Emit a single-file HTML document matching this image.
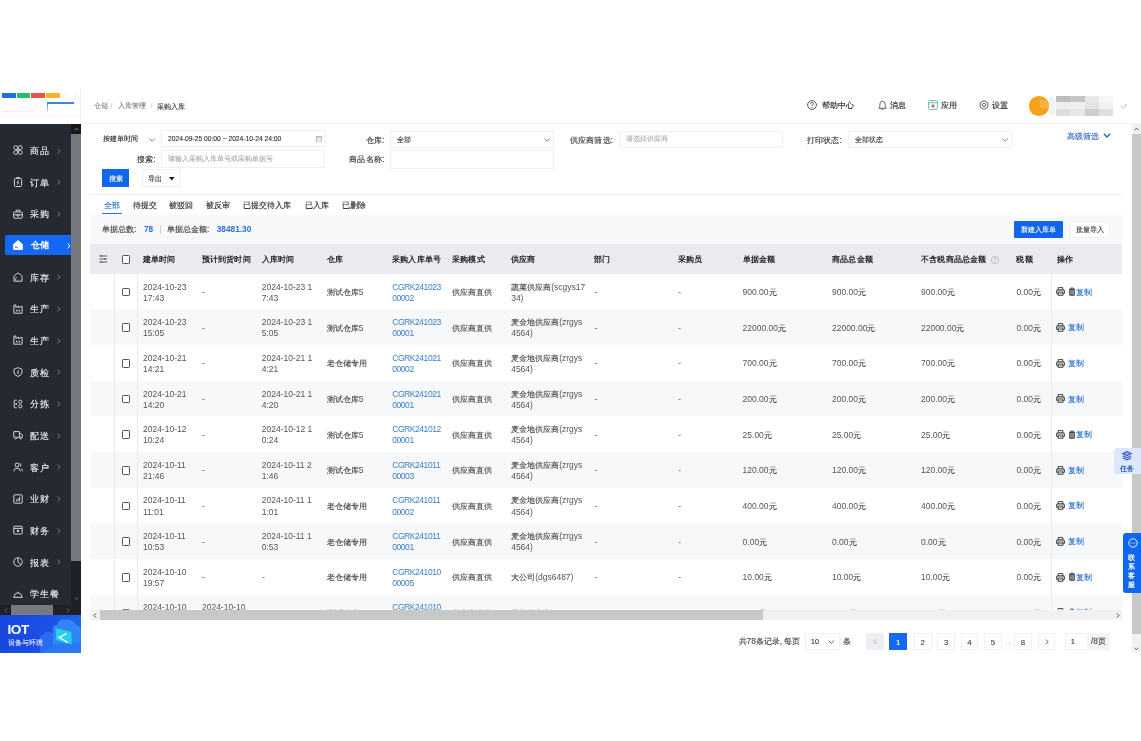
<!DOCTYPE html><html><head><meta charset="utf-8"><style>
*{margin:0;padding:0;box-sizing:border-box}
html,body{width:1141px;height:741px;overflow:hidden;background:#fff}
body{font-family:"Liberation Sans",sans-serif;color:#333;position:relative}
.abs{position:absolute}
.t{position:absolute;white-space:nowrap;line-height:1;-webkit-text-stroke:.12px currentColor}
.n{-webkit-text-stroke:0}
.k{-webkit-text-stroke:.08px currentColor}
svg{position:absolute;overflow:visible}
</style></head><body><div style="position:absolute;left:0;top:0;width:1141px;height:741px;will-change:transform">
<div class="abs" style="left:0px;top:88px;width:81px;height:36px;background:#fff;border-right:1px solid #eef0f4"></div>
<div class="abs" style="left:2px;top:93px;width:14px;height:4.6px;background:#1f6fe0"></div>
<div class="abs" style="left:17px;top:93px;width:13px;height:4.6px;background:#1fc26a"></div>
<div class="abs" style="left:31px;top:93px;width:14px;height:4.6px;background:#e9534d"></div>
<div class="abs" style="left:46px;top:93px;width:13.5px;height:4.6px;background:#f5b42a"></div>
<div class="abs" style="left:47px;top:102px;width:27px;height:1.6px;background:#3a86e0"></div>
<div class="abs" style="left:46.8px;top:102px;width:1.4px;height:9px;background:linear-gradient(#3a86e0,#a8ccf4)"></div>
<svg style="left:2px;top:100px;" width="45" height="12" viewBox="0 0 45 12" fill="none"><path d="M1 11.5 H8 L11 11 H32 L35.5 3.5" stroke="#e8d0d0" stroke-width=".6"/></svg>
<div class="abs" style="left:65.5px;top:93px;width:0.8px;height:6px;background:#eeeeee"></div>
<div class="abs" style="left:75.3px;top:93px;width:0.8px;height:6px;background:#eeeeee"></div>
<div class="abs" style="left:2px;top:114.5px;width:76px;height:0.8px;background:#f3f4f6"></div>
<div class="abs" style="left:0px;top:123.7px;width:81px;height:491.3px;background:#252932"></div>
<div class="abs" style="left:71px;top:123.7px;width:10px;height:481.3px;background:#1f2127"></div>
<div class="abs" style="left:71px;top:123.7px;width:10px;height:10.3px;background:#16171a"></div>
<svg style="left:73.5px;top:126.5px;" width="5" height="4" viewBox="0 0 5 4" fill="none"><path d="M.6 3.2 L2.5 1.2 L4.4 3.2" stroke="#8a8c90" stroke-width="1"/></svg>
<div class="abs" style="left:71px;top:134px;width:10px;height:427px;background:#77797e"></div>
<svg style="left:73.5px;top:597px;" width="5" height="4" viewBox="0 0 5 4" fill="none"><path d="M.6 .8 L2.5 2.8 L4.4 .8" stroke="#6a6c70" stroke-width="1"/></svg>
<div class="t" style="left:30.2px;top:147.10000000000002px;font-size:9.1px;color:#eceef2;letter-spacing:.8px">商品</div>
<svg style="left:56.6px;top:147.70000000000002px;" width="4" height="6" viewBox="0 0 4 6" fill="none"><path d="M.6 .6 L3 3 L.6 5.4" stroke="#7d8088" stroke-width=".9"/></svg>
<svg style="left:13.4px;top:145.3px;" width="10" height="10" viewBox="0 0 10 10" fill="none"><g stroke="#cfd2d8" stroke-width="1"><path d="M4.6 4.4 H2.5 A1.9 1.9 0 1 1 4.6 2.4 Z M5.4 4.4 V2.4 A1.9 1.9 0 1 1 7.5 4.4 Z M4.6 5.6 V7.6 A1.9 1.9 0 1 1 2.5 5.6 Z M5.4 5.6 H7.5 A1.9 1.9 0 1 1 5.4 7.6 Z"/></g></svg>
<div class="t" style="left:30.2px;top:178.77000000000004px;font-size:9.1px;color:#eceef2;letter-spacing:.8px">订单</div>
<svg style="left:56.6px;top:179.37000000000003px;" width="4" height="6" viewBox="0 0 4 6" fill="none"><path d="M.6 .6 L3 3 L.6 5.4" stroke="#7d8088" stroke-width=".9"/></svg>
<svg style="left:13.4px;top:176.97000000000003px;" width="10" height="10" viewBox="0 0 10 10" fill="none"><g stroke="#cfd2d8" stroke-width="1"><rect x="1.4" y="1.4" width="7.2" height="8.1" rx="1"/><path d="M3.5 1.4 V.6 H6.5 V1.4"/><path d="M5.6 3.4 L4 5.6 H5.6 L4.6 7.6" stroke-width=".9"/></g></svg>
<div class="t" style="left:30.2px;top:210.44000000000003px;font-size:9.1px;color:#eceef2;letter-spacing:.8px">采购</div>
<svg style="left:56.6px;top:211.04000000000002px;" width="4" height="6" viewBox="0 0 4 6" fill="none"><path d="M.6 .6 L3 3 L.6 5.4" stroke="#7d8088" stroke-width=".9"/></svg>
<svg style="left:13.4px;top:208.64000000000001px;" width="10" height="10" viewBox="0 0 10 10" fill="none"><g stroke="#cfd2d8" stroke-width="1"><rect x=".7" y="3" width="8.6" height="6.2" rx=".8"/><path d="M3.2 3 V1.2 H6.8 V3 M.7 5.8 H9.3 M4 5.8 V7 H6 V5.8"/></g></svg>
<div class="abs" style="left:5.3px;top:235.01px;width:66px;height:20.2px;background:#1468f5;border-radius:2px 0 0 2px"></div>
<div class="t n" style="left:30.6px;top:240.71px;font-size:9.1px;color:#fff;font-weight:bold">仓储</div>
<svg style="left:66.5px;top:242.71px;" width="4" height="6" viewBox="0 0 4 6" fill="none"><path d="M.6 .6 L3 3 L.6 5.4" stroke="#fff" stroke-width="1"/></svg>
<svg style="left:13.4px;top:240.31px;" width="10" height="10" viewBox="0 0 10 10" fill="none"><g stroke="#fff" stroke-width="1"><path d="M.6 4.4 L5 .6 L9.4 4.4 V9.4 H.6 Z" fill="#fff" stroke="#fff"/><rect x="2.3" y="6.3" width="1.3" height="1.6" fill="#1468f5" stroke="none"/><rect x="4" y="7.3" width="1" height="1" fill="#1468f5" stroke="none"/></g></svg>
<div class="t" style="left:30.2px;top:273.78000000000003px;font-size:9.1px;color:#eceef2;letter-spacing:.8px">库存</div>
<svg style="left:56.6px;top:274.38px;" width="4" height="6" viewBox="0 0 4 6" fill="none"><path d="M.6 .6 L3 3 L.6 5.4" stroke="#7d8088" stroke-width=".9"/></svg>
<svg style="left:13.4px;top:271.98px;" width="10" height="10" viewBox="0 0 10 10" fill="none"><g stroke="#cfd2d8" stroke-width="1"><path d="M1 4.4 Q1 3.8 1.5 3.4 L5 .9 L8.5 3.4 Q9 3.8 9 4.4 V9.2 H1 Z"/><path d="M2.6 5.4 H3.8 M2.6 6.6 V8.4 M4.6 7.8 V8.4" stroke-width=".9"/></g></svg>
<div class="t" style="left:30.2px;top:305.45000000000005px;font-size:9.1px;color:#eceef2;letter-spacing:.8px">生产</div>
<svg style="left:56.6px;top:306.05px;" width="4" height="6" viewBox="0 0 4 6" fill="none"><path d="M.6 .6 L3 3 L.6 5.4" stroke="#7d8088" stroke-width=".9"/></svg>
<svg style="left:13.4px;top:303.65000000000003px;" width="10" height="10" viewBox="0 0 10 10" fill="none"><g stroke="#cfd2d8" stroke-width="1"><path d="M.9 9.2 V1 H2.8 V3.6 L5.6 2 V3.6 L9.1 2.2 V9.2 Z"/><rect x="3" y="5.8" width="1.5" height="1.6" fill="#cfd2d8" stroke="none"/><rect x="5.6" y="5.8" width="1.5" height="1.6" fill="#cfd2d8" stroke="none"/></g></svg>
<div class="t" style="left:30.2px;top:337.12000000000006px;font-size:9.1px;color:#eceef2;letter-spacing:.8px">生产</div>
<svg style="left:56.6px;top:337.72px;" width="4" height="6" viewBox="0 0 4 6" fill="none"><path d="M.6 .6 L3 3 L.6 5.4" stroke="#7d8088" stroke-width=".9"/></svg>
<svg style="left:13.4px;top:335.32000000000005px;" width="10" height="10" viewBox="0 0 10 10" fill="none"><g stroke="#cfd2d8" stroke-width="1"><path d="M.9 9.2 V1 H2.8 V3.6 L5.6 2 V3.6 L9.1 2.2 V9.2 Z"/><rect x="3" y="5.8" width="1.5" height="1.6" fill="#cfd2d8" stroke="none"/><rect x="5.6" y="5.8" width="1.5" height="1.6" fill="#cfd2d8" stroke="none"/></g></svg>
<div class="t" style="left:30.2px;top:368.79px;font-size:9.1px;color:#eceef2;letter-spacing:.8px">质检</div>
<svg style="left:56.6px;top:369.39px;" width="4" height="6" viewBox="0 0 4 6" fill="none"><path d="M.6 .6 L3 3 L.6 5.4" stroke="#7d8088" stroke-width=".9"/></svg>
<svg style="left:13.4px;top:366.99px;" width="10" height="10" viewBox="0 0 10 10" fill="none"><g stroke="#cfd2d8" stroke-width="1"><path d="M5 .7 L9 2.2 V5.2 Q9 8 5 9.5 Q1 8 1 5.2 V2.2 Z"/><path d="M5.6 3.2 L4.2 5.2 H5.6 L4.6 7.2" stroke-width=".8"/></g></svg>
<div class="t" style="left:30.2px;top:400.46000000000004px;font-size:9.1px;color:#eceef2;letter-spacing:.8px">分拣</div>
<svg style="left:56.6px;top:401.06px;" width="4" height="6" viewBox="0 0 4 6" fill="none"><path d="M.6 .6 L3 3 L.6 5.4" stroke="#7d8088" stroke-width=".9"/></svg>
<svg style="left:13.4px;top:398.66px;" width="10" height="10" viewBox="0 0 10 10" fill="none"><g stroke="#cfd2d8" stroke-width="1"><path d="M3.8 1.2 H2 Q1.2 1.2 1.2 2 V8 Q1.2 8.8 2 8.8 H3.8"/><rect x="5.8" y="1.2" width="3" height="3" rx="1"/><rect x="5.8" y="5.8" width="3" height="3" rx="1"/><circle cx="3.3" cy="5" r=".6" fill="#cfd2d8"/></g></svg>
<div class="t" style="left:30.2px;top:432.13000000000005px;font-size:9.1px;color:#eceef2;letter-spacing:.8px">配送</div>
<svg style="left:56.6px;top:432.73px;" width="4" height="6" viewBox="0 0 4 6" fill="none"><path d="M.6 .6 L3 3 L.6 5.4" stroke="#7d8088" stroke-width=".9"/></svg>
<svg style="left:13.4px;top:430.33000000000004px;" width="10" height="10" viewBox="0 0 10 10" fill="none"><g stroke="#cfd2d8" stroke-width="1"><path d="M.8 7.4 V1.6 H6.4 V7.4 M6.4 3.4 H8 L9.3 5 V7.4 H8.6 M3.5 7.4 H6.4"/><circle cx="2.6" cy="8" r="1"/><circle cx="7.6" cy="8" r="1"/></g></svg>
<div class="t" style="left:30.2px;top:463.80000000000007px;font-size:9.1px;color:#eceef2;letter-spacing:.8px">客户</div>
<svg style="left:56.6px;top:464.40000000000003px;" width="4" height="6" viewBox="0 0 4 6" fill="none"><path d="M.6 .6 L3 3 L.6 5.4" stroke="#7d8088" stroke-width=".9"/></svg>
<svg style="left:13.4px;top:462.00000000000006px;" width="10" height="10" viewBox="0 0 10 10" fill="none"><g stroke="#cfd2d8" stroke-width="1"><circle cx="4" cy="3" r="2"/><path d="M.8 9.3 Q.8 6.2 4 6.2 Q7.2 6.2 7.2 9.3 M6.8 1.1 Q8.6 2.2 7.4 4.6 M8.2 6.4 Q9.4 7.2 9.3 9.3"/></g></svg>
<div class="t" style="left:30.2px;top:495.47px;font-size:9.1px;color:#eceef2;letter-spacing:.8px">业财</div>
<svg style="left:56.6px;top:496.07px;" width="4" height="6" viewBox="0 0 4 6" fill="none"><path d="M.6 .6 L3 3 L.6 5.4" stroke="#7d8088" stroke-width=".9"/></svg>
<svg style="left:13.4px;top:493.67px;" width="10" height="10" viewBox="0 0 10 10" fill="none"><g stroke="#cfd2d8" stroke-width="1"><rect x=".8" y=".8" width="8.4" height="8.4" rx=".8"/><path d="M3.4 5.4 V7.4 M5 4.2 V7.4 M6.6 2.8 V7.4"/></g></svg>
<div class="t" style="left:30.2px;top:527.14px;font-size:9.1px;color:#eceef2;letter-spacing:.8px">财务</div>
<svg style="left:56.6px;top:527.74px;" width="4" height="6" viewBox="0 0 4 6" fill="none"><path d="M.6 .6 L3 3 L.6 5.4" stroke="#7d8088" stroke-width=".9"/></svg>
<svg style="left:13.4px;top:525.34px;" width="10" height="10" viewBox="0 0 10 10" fill="none"><g stroke="#cfd2d8" stroke-width="1"><rect x=".8" y="1.2" width="8.4" height="7.8" rx=".6"/><path d="M.8 3.4 H9.2"/><rect x="3.9" y="4.8" width="2.2" height="2.2" fill="#cfd2d8" stroke="none"/></g></svg>
<div class="t" style="left:30.2px;top:558.81px;font-size:9.1px;color:#eceef2;letter-spacing:.8px">报表</div>
<svg style="left:56.6px;top:559.41px;" width="4" height="6" viewBox="0 0 4 6" fill="none"><path d="M.6 .6 L3 3 L.6 5.4" stroke="#7d8088" stroke-width=".9"/></svg>
<svg style="left:13.4px;top:557.01px;" width="10" height="10" viewBox="0 0 10 10" fill="none"><g stroke="#cfd2d8" stroke-width="1"><circle cx="5" cy="5" r="4.2"/><path d="M5 .8 V5 L8 7.8"/></g></svg>
<div class="t" style="left:30.2px;top:590.48px;font-size:9.1px;color:#eceef2;letter-spacing:.8px">学生餐</div>
<svg style="left:13.4px;top:588.6800000000001px;" width="10" height="10" viewBox="0 0 10 10" fill="none"><g stroke="#cfd2d8" stroke-width="1"><path d="M.3 8.3 H9.7 M1.2 8.3 Q1.2 4 5 4 Q8.8 4 8.8 8.3 M5 4 V2.8"/></g></svg>
<div class="abs" style="left:0px;top:605px;width:81px;height:9.7px;background:#1f2127"></div>
<div class="abs" style="left:11px;top:605px;width:42px;height:9.7px;background:#77797e"></div>
<svg style="left:3.5px;top:607.5px;" width="4" height="5" viewBox="0 0 4 5" fill="none"><path d="M3 .5 L1 2.5 L3 4.5" stroke="#6a6c70" stroke-width="1"/></svg>
<svg style="left:65.5px;top:607.5px;" width="4" height="5" viewBox="0 0 4 5" fill="none"><path d="M1 .5 L3 2.5 L1 4.5" stroke="#6a6c70" stroke-width="1"/></svg>
<div class="abs" style="left:0;top:614.7px;width:81px;height:38px;background:linear-gradient(100deg,#1a46dc 0%,#1b52e6 60%,#2466ee 100%);overflow:hidden"><svg style="left:0;top:0" width="81" height="38" viewBox="0 0 81 38"><path d="M40 38 V22 L47 16.5 L56 19 V38 Z" fill="#2a6cf0"/><path d="M53 38 V14 Q53 10 57 10 Q59 3.5 66 4.5 Q73 4 76 10 Q81 11 81 16 V38 Z" fill="#2f86f4"/><path d="M44 38 L52 30 L81 27 V38 Z" fill="#2a78f2"/><path d="M55.7 13 L71.6 17 V29.5 L56.2 25.2 Z" fill="#24d0ea"/><path d="M65.7 19 L59.4 22.4 L66.8 27" stroke="#f0fdff" stroke-width="1.4" fill="none"/><circle cx="65.7" cy="19" r="1" fill="#fff"/><circle cx="59.4" cy="22.4" r="1" fill="#fff"/><circle cx="66.8" cy="27" r="1" fill="#fff"/></svg><div class="t n" style="left:7.6px;top:8.2px;font-size:13.6px;font-weight:bold;color:#fff;letter-spacing:-.5px">IOT</div><div class="t" style="left:7.8px;top:24.7px;font-size:7.3px;color:#dbe6ff">设备与环境</div></div>
<div class="abs" style="left:81px;top:122.7px;width:1060px;height:1px;background:#eef0f3"></div>
<div class="t" style="left:93.6px;top:103.3px;font-size:6.8px;color:#8f9299;">仓储</div>
<div class="t" style="left:110.5px;top:103.3px;font-size:6.8px;color:#c4c6cb;">/</div>
<div class="t" style="left:118.3px;top:103.3px;font-size:7.1px;color:#7f828a;">入库管理</div>
<div class="t" style="left:150.5px;top:103.3px;font-size:6.8px;color:#c4c6cb;">/</div>
<div class="t" style="left:157px;top:102.8px;font-size:7.2px;color:#2f3238;">采购入库</div>
<div class="t" style="left:822px;top:100.8px;font-size:8.3px;color:#222;">帮助中心</div>
<div class="t" style="left:889.5px;top:100.8px;font-size:8.3px;color:#222;">消息</div>
<div class="t" style="left:941px;top:100.8px;font-size:8.3px;color:#222;">应用</div>
<div class="t" style="left:992px;top:100.8px;font-size:8.3px;color:#222;">设置</div>
<svg style="left:807.2px;top:100px;" width="10" height="10" viewBox="0 0 10 10" fill="none"><circle cx="5" cy="5" r="4.4" stroke="#555" stroke-width="1"/><path d="M3.5 3.9 Q3.5 2.4 5 2.4 Q6.5 2.4 6.5 3.7 Q6.5 4.6 5 5.2 V6.2" stroke="#555" stroke-width=".9"/><circle cx="5" cy="7.5" r=".55" fill="#555"/></svg>
<svg style="left:877.6px;top:100px;" width="9" height="10" viewBox="0 0 9 10" fill="none"><path d="M1.8 7.6 V4.6 Q1.8 1.2 4.5 1.2 Q7.2 1.2 7.2 4.6 V7.6 L8.2 8.3 H.8 Z M3.4 9.3 H5.6" stroke="#555" stroke-width=".9"/></svg>
<svg style="left:928px;top:100px;" width="10" height="10" viewBox="0 0 10 10" fill="none"><rect x=".6" y=".6" width="8.8" height="8.8" rx="1" stroke="#5ec4a8" stroke-width="1"/><path d="M.6 2.8 H9.4" stroke="#5ec4a8" stroke-width="1"/><path d="M3.2 6 H6.8 M5 4.2 V7.8" stroke="#ef5a6a" stroke-width="1.3"/></svg>
<svg style="left:979px;top:100px;" width="10" height="10" viewBox="0 0 10 10" fill="none"><path d="M5 .7 L8.8 2.85 V7.15 L5 9.3 L1.2 7.15 V2.85 Z" stroke="#555" stroke-width=".9"/><circle cx="5" cy="5" r="1.7" stroke="#555" stroke-width=".9"/></svg>
<div class="abs" style="left:1029.3px;top:96.3px;width:19.5px;height:19.3px;border-radius:50%;background:#f6a21c;overflow:hidden"><div class="abs" style="left:11px;top:4px;width:9px;height:8px;background:#f9b23d"></div></div>
<div class="abs" style="left:1048.8px;top:97px;width:6.7px;height:18px;background:#f2f2f4"></div>
<div class="abs" style="left:1055.5px;top:96.3px;width:14.5px;height:5.700000000000003px;background:#bdbdbd"></div>
<div class="abs" style="left:1070px;top:96.3px;width:14.5px;height:5.700000000000003px;background:#c6c6c6"></div>
<div class="abs" style="left:1084.5px;top:96.3px;width:14.0px;height:5.700000000000003px;background:#e9e9e9"></div>
<div class="abs" style="left:1098.5px;top:96.3px;width:14.299999999999955px;height:5.700000000000003px;background:#f6f6f6"></div>
<div class="abs" style="left:1055.5px;top:102px;width:14.5px;height:7px;background:#eeeeee"></div>
<div class="abs" style="left:1070px;top:102px;width:14.5px;height:7px;background:#efefef"></div>
<div class="abs" style="left:1084.5px;top:102px;width:14.0px;height:7px;background:#e4e4e4"></div>
<div class="abs" style="left:1098.5px;top:102px;width:14.299999999999955px;height:7px;background:#f0f0f0"></div>
<div class="abs" style="left:1055.5px;top:109px;width:14.5px;height:6.700000000000003px;background:#dedede"></div>
<div class="abs" style="left:1070px;top:109px;width:14.5px;height:6.700000000000003px;background:#e7e7e7"></div>
<div class="abs" style="left:1084.5px;top:109px;width:14.0px;height:6.700000000000003px;background:#cdcdcd"></div>
<div class="abs" style="left:1098.5px;top:109px;width:14.299999999999955px;height:6.700000000000003px;background:#dfdfdf"></div>
<svg style="left:1120px;top:103.5px;" width="7" height="6" viewBox="0 0 7 6" fill="none"><path d="M.8 1.2 L3.2 4.6 L6.2 .8 M4.6 .8 H6.2 V2.2" stroke="#c4c4c4" stroke-width="1"/></svg>
<div class="abs" style="left:1131.5px;top:123.7px;width:9.5px;height:529px;background:#f1f1f1"></div>
<div class="abs" style="left:1131.5px;top:134px;width:9.5px;height:499.7px;background:#c8c8c8"></div>
<svg style="left:1134px;top:127px;" width="5" height="4" viewBox="0 0 5 4" fill="none"><path d="M.6 3.2 L2.5 1.2 L4.4 3.2" stroke="#555" stroke-width="1"/></svg>
<svg style="left:1134px;top:646.5px;" width="5" height="4" viewBox="0 0 5 4" fill="none"><path d="M.6 .8 L2.5 2.8 L4.4 .8" stroke="#555" stroke-width="1"/></svg>
<div class="t" style="left:102.5px;top:136.4px;font-size:7.1px;color:#1f1f1f;">按建单时间</div>
<svg style="left:149.3px;top:138px;" width="6.5" height="4" viewBox="0 0 6.5 4" fill="none"><path d="M.6 .6 L3.25 3.2 L5.9 .6" stroke="#777" stroke-width=".95"/></svg>
<div class="abs" style="left:161.4px;top:130.4px;width:163.6px;height:17px;border:1px solid #eff0f3;background:#fff"></div>
<div class="t" style="left:168px;top:136.2px;font-size:6.7px;color:#333;">2024-09-25 00:00 ~ 2024-10-24 24:00</div>
<svg style="left:315.5px;top:135.8px;" width="6" height="5.5" viewBox="0 0 6 5.5" fill="none"><rect x=".5" y=".5" width="5" height="4.5" stroke="#aaa" stroke-width=".8"/><path d="M.5 2 H5.5" stroke="#aaa" stroke-width=".8"/></svg>
<div class="abs" style="left:161.4px;top:150px;width:163.6px;height:18px;border:1px solid #eff0f3;background:#fff"></div>
<div class="t" style="left:168px;top:155.9px;font-size:7.1px;color:#aaa;">请输入采购入库单号或采购单据号</div>
<div class="t" style="left:-44.099999999999994px;width:200px;text-align:right;top:155.2px;font-size:8.45px;color:#333;letter-spacing:.3px">搜索:</div>
<div class="t" style="left:184.60000000000002px;width:200px;text-align:right;top:135.6px;font-size:8.45px;color:#333;letter-spacing:.2px">仓库:</div>
<div class="abs" style="left:390px;top:130.6px;width:163.5px;height:17px;border:1px solid #eff0f3;background:#fff"></div>
<div class="t" style="left:396.5px;top:136.6px;font-size:7.1px;color:#333;">全部</div>
<svg style="left:544px;top:138px;" width="6.5" height="4" viewBox="0 0 6.5 4" fill="none"><path d="M.6 .6 L3.25 3.2 L5.9 .6" stroke="#777" stroke-width=".95"/></svg>
<div class="t" style="left:184.60000000000002px;width:200px;text-align:right;top:155.2px;font-size:8.45px;color:#333;letter-spacing:.2px">商品名称:</div>
<div class="abs" style="left:390px;top:150px;width:163.5px;height:18.5px;border:1px solid #eff0f3;background:#fff"></div>
<div class="t" style="left:413.4px;width:200px;text-align:right;top:135.6px;font-size:8.45px;color:#333;letter-spacing:.2px">供应商筛选:</div>
<div class="abs" style="left:619px;top:130.6px;width:164px;height:17px;border:1px solid #eff0f3;background:#fff"></div>
<div class="t" style="left:626px;top:136.4px;font-size:7.1px;color:#b0b0b0;">请选择供应商</div>
<div class="t" style="left:642.1px;width:200px;text-align:right;top:135.6px;font-size:8.45px;color:#333;letter-spacing:.2px">打印状态:</div>
<div class="abs" style="left:848px;top:130.6px;width:163.5px;height:17px;border:1px solid #eff0f3;background:#fff"></div>
<div class="t" style="left:855px;top:136.6px;font-size:7.1px;color:#333;">全部状态</div>
<svg style="left:1001.5px;top:138px;" width="6.5" height="4" viewBox="0 0 6.5 4" fill="none"><path d="M.6 .6 L3.25 3.2 L5.9 .6" stroke="#777" stroke-width=".95"/></svg>
<div class="t" style="left:1067px;top:131.6px;font-size:8.3px;color:#2a62c4;">高级筛选</div>
<svg style="left:1103px;top:133.3px;" width="8" height="5" viewBox="0 0 8 5" fill="none"><path d="M.8 .8 L4 4 L7.2 .8" stroke="#2a62c4" stroke-width="1.3"/></svg>
<div class="abs" style="left:102px;top:169px;width:27px;height:17.7px;background:#1266ea"></div>
<div class="t" style="left:109px;top:174.9px;font-size:7px;color:#fff;">搜索</div>
<div class="abs" style="left:141.8px;top:169px;width:39.7px;height:17.7px;border:1px solid #eef0f3"></div>
<div class="t" style="left:148.2px;top:175.2px;font-size:7.2px;color:#333;">导出</div>
<svg style="left:169.2px;top:176.6px;" width="5.6" height="3.6" viewBox="0 0 5.6 3.6" fill="none"><path d="M0 0 H5.6 L2.8 3.6 Z" fill="#1a1a1a"/></svg>
<div class="abs" style="left:90px;top:193.5px;width:1032px;height:1px;background:#eef0f3"></div>
<div class="t" style="left:104px;top:201px;font-size:8.3px;color:#2a6fd6;">全部</div>
<div class="t" style="left:132.5px;top:201px;font-size:8.3px;color:#262626;">待提交</div>
<div class="t" style="left:169px;top:201px;font-size:8.3px;color:#262626;">被驳回</div>
<div class="t" style="left:206px;top:201px;font-size:8.3px;color:#262626;">被反审</div>
<div class="t" style="left:243px;top:201px;font-size:8.3px;color:#262626;">已提交待入库</div>
<div class="t" style="left:305px;top:201px;font-size:8.3px;color:#262626;">已入库</div>
<div class="t" style="left:342px;top:201px;font-size:8.3px;color:#262626;">已删除</div>
<div class="abs" style="left:102px;top:212.5px;width:19.5px;height:1.6px;background:#2a6fd6"></div>
<div class="abs" style="left:89.6px;top:214.7px;width:1032.4px;height:29.3px;background:#f7f8fa"></div>
<div class="t" style="left:102px;top:225px;font-size:8.3px;color:#383838;">单据总数:</div>
<div class="t n" style="left:144px;top:225px;font-size:8.3px;color:#2a6fd6;font-weight:bold">78</div>
<div class="abs" style="left:160px;top:224.5px;width:1px;height:9px;background:#d0d0d0"></div>
<div class="t" style="left:167px;top:225px;font-size:8.3px;color:#383838;">单据总金额:</div>
<div class="t n" style="left:216.7px;top:225px;font-size:8.3px;color:#2a6fd6;font-weight:bold">38481.30</div>
<div class="abs" style="left:1014.2px;top:220.5px;width:48.6px;height:17.3px;background:#1266ec;border-radius:1px"></div>
<div class="t" style="left:1021px;top:226.9px;font-size:7.1px;color:#fff;">新建入库单</div>
<div class="abs" style="left:1069.8px;top:220.5px;width:40.2px;height:17.3px;background:#fff;border:1px solid #f0f1f4"></div>
<div class="t" style="left:1075.6px;top:226.9px;font-size:7.1px;color:#333;">批量导入</div>
<div class="abs" style="left:89.6px;top:244px;width:1032.4px;height:29.7px;background:#eaebf0"></div>
<div class="t n" style="left:142.6px;top:255.5px;font-size:8.1px;color:#262626;font-weight:bold;letter-spacing:.2px">建单时间</div>
<div class="t n" style="left:201.7px;top:255.5px;font-size:8.1px;color:#262626;font-weight:bold;letter-spacing:.2px">预计到货时间</div>
<div class="t n" style="left:261.5px;top:255.5px;font-size:8.1px;color:#262626;font-weight:bold;letter-spacing:.2px">入库时间</div>
<div class="t n" style="left:326.5px;top:255.5px;font-size:8.1px;color:#262626;font-weight:bold;letter-spacing:.2px">仓库</div>
<div class="t n" style="left:392px;top:255.5px;font-size:8.1px;color:#262626;font-weight:bold;letter-spacing:.2px">采购入库单号</div>
<div class="t n" style="left:452px;top:255.5px;font-size:8.1px;color:#262626;font-weight:bold;letter-spacing:.2px">采购模式</div>
<div class="t n" style="left:511px;top:255.5px;font-size:8.1px;color:#262626;font-weight:bold;letter-spacing:.2px">供应商</div>
<div class="t n" style="left:594px;top:255.5px;font-size:8.1px;color:#262626;font-weight:bold;letter-spacing:.2px">部门</div>
<div class="t n" style="left:678px;top:255.5px;font-size:8.1px;color:#262626;font-weight:bold;letter-spacing:.2px">采购员</div>
<div class="t n" style="left:742.6px;top:255.5px;font-size:8.1px;color:#262626;font-weight:bold;letter-spacing:.2px">单据金额</div>
<div class="t n" style="left:832px;top:255.5px;font-size:8.1px;color:#262626;font-weight:bold;letter-spacing:.2px">商品总金额</div>
<div class="t n" style="left:921px;top:255.5px;font-size:8.1px;color:#262626;font-weight:bold;letter-spacing:.2px">不含税商品总金额</div>
<div class="t n" style="left:1016.4px;top:255.5px;font-size:8.1px;color:#262626;font-weight:bold;letter-spacing:.2px">税额</div>
<div class="t n" style="left:1056.5px;top:255.5px;font-size:8.1px;color:#262626;font-weight:bold;letter-spacing:.2px">操作</div>
<svg style="left:991px;top:255.5px;" width="8" height="8" viewBox="0 0 10 10" fill="none"><circle cx="5" cy="5" r="4.5" stroke="#aaa" stroke-width=".8"/><path d="M3.8 4 Q3.8 2.9 5 2.9 Q6.2 2.9 6.2 3.9 Q6.2 4.6 5 5.1 V6" stroke="#aaa" stroke-width=".8"/><circle cx="5" cy="7.2" r=".5" fill="#aaa"/></svg>
<svg style="left:99px;top:255px;" width="8.5" height="8" viewBox="0 0 8.5 8" fill="none"><path d="M.3 1 H8.2 M.3 4 H8.2 M.3 7 H8.2" stroke="#666" stroke-width="1.1"/><path d="M2.5 .2 V1.8 M5.5 3.2 V4.8 M2.5 6.2 V7.8" stroke="#555" stroke-width="1.3"/></svg>
<div class="abs" style="left:121.6px;top:255px;width:8.6px;height:8.8px;border:1px solid #555;border-radius:1.2px;background:#fff"></div>
<div class="abs" style="left:0;top:0;width:1141px;height:741px;overflow:hidden;clip-path:inset(273.7px 0 131.2px 0)">
<div class="abs" style="left:89.6px;top:273.7px;width:1032.4px;height:35.66px;background:#fff"></div>
<div class="abs" style="left:121.5px;top:287.72999999999996px;width:8.6px;height:8.6px;border:1px solid #555;border-radius:1.2px;background:#fff"></div>
<div class="t n" style="left:143px;top:281.53px;font-size:8.49px;line-height:11.1px;color:#555;">2024-10-23<br>17:43</div>
<div class="t n" style="left:202px;top:287.03px;font-size:8.49px;line-height:11.1px;color:#555;">-</div>
<div class="t n" style="left:261.8px;top:281.53px;font-size:8.49px;line-height:11.1px;color:#555;">2024-10-23 1<br>7:43</div>
<div class="t n" style="left:326.8px;top:287.03px;font-size:8.49px;line-height:11.1px;color:#555;"><span class="k" style="color:#383838">测试仓库</span>5</div>
<div class="t n" style="left:392.2px;top:281.53px;font-size:8.49px;line-height:11.1px;color:#3a7fc4;letter-spacing:-0.42px">CGRK241023<br>00002</div>
<div class="t n" style="left:452px;top:287.03px;font-size:8.49px;line-height:11.1px;color:#555;"><span class="k" style="color:#383838">供应商直供</span></div>
<div class="t n" style="left:511.2px;top:281.53px;font-size:8.49px;line-height:11.1px;color:#555;"><span class="k" style="color:#383838">蔬菜供应商</span>(scgys17<br>34)</div>
<div class="t n" style="left:594.8px;top:287.03px;font-size:8.49px;line-height:11.1px;color:#555;">-</div>
<div class="t n" style="left:678.3px;top:287.03px;font-size:8.49px;line-height:11.1px;color:#555;">-</div>
<div class="t n" style="left:742.6px;top:287.03px;font-size:8.49px;line-height:11.1px;color:#555;">900.00<span class="k" style="color:#383838">元</span></div>
<div class="t n" style="left:832px;top:287.03px;font-size:8.49px;line-height:11.1px;color:#555;">900.00<span class="k" style="color:#383838">元</span></div>
<div class="t n" style="left:921px;top:287.03px;font-size:8.49px;line-height:11.1px;color:#555;">900.00<span class="k" style="color:#383838">元</span></div>
<div class="t n" style="left:1016.4px;top:287.03px;font-size:8.49px;line-height:11.1px;color:#555;">0.00<span class="k" style="color:#383838">元</span></div>
<svg style="left:1056px;top:287.33px;" width="9" height="8.6" viewBox="0 0 9 8.6" fill="none"><path d="M2.2 2.8 V.6 H6.8 V2.8" stroke="#444" stroke-width="1"/><rect x=".6" y="2.9" width="7.8" height="3.9" rx="1.3" stroke="#444" stroke-width="1.1"/><rect x="2.2" y="5" width="4.6" height="3.3" fill="#fff" stroke="#444" stroke-width="1"/><path d="M3.3 6.6 H5.7" stroke="#444" stroke-width=".7"/></svg>
<svg style="left:1069px;top:287.03px;" width="6" height="9" viewBox="0 0 6 9" fill="none"><path d="M1.2 1.4 Q1.4 .4 3 .4 Q4.6 .4 4.8 1.4" fill="#3a3a46"/><rect x=".2" y="1.4" width="5.6" height="7.4" rx=".8" fill="#3a3a46"/><rect x="1.2" y="2.8" width="1.5" height="5" fill="#9a9aaa"/><rect x="3.3" y="2.8" width="1.5" height="5" fill="#a0a8b8"/></svg>
<div class="t" style="left:1076.3px;top:288.53px;font-size:8.2px;color:#1f6dd0;">复制</div>
<div class="abs" style="left:89.6px;top:309.36px;width:1032.4px;height:35.66px;background:#f7f8fa"></div>
<div class="abs" style="left:121.5px;top:323.39px;width:8.6px;height:8.6px;border:1px solid #555;border-radius:1.2px;background:#fff"></div>
<div class="t n" style="left:143px;top:317.19px;font-size:8.49px;line-height:11.1px;color:#555;">2024-10-23<br>15:05</div>
<div class="t n" style="left:202px;top:322.69px;font-size:8.49px;line-height:11.1px;color:#555;">-</div>
<div class="t n" style="left:261.8px;top:317.19px;font-size:8.49px;line-height:11.1px;color:#555;">2024-10-23 1<br>5:05</div>
<div class="t n" style="left:326.8px;top:322.69px;font-size:8.49px;line-height:11.1px;color:#555;"><span class="k" style="color:#383838">测试仓库</span>5</div>
<div class="t n" style="left:392.2px;top:317.19px;font-size:8.49px;line-height:11.1px;color:#3a7fc4;letter-spacing:-0.42px">CGRK241023<br>00001</div>
<div class="t n" style="left:452px;top:322.69px;font-size:8.49px;line-height:11.1px;color:#555;"><span class="k" style="color:#383838">供应商直供</span></div>
<div class="t n" style="left:511.2px;top:317.19px;font-size:8.49px;line-height:11.1px;color:#555;"><span class="k" style="color:#383838">麦金地供应商</span>(zrgys<br>4564)</div>
<div class="t n" style="left:594.8px;top:322.69px;font-size:8.49px;line-height:11.1px;color:#555;">-</div>
<div class="t n" style="left:678.3px;top:322.69px;font-size:8.49px;line-height:11.1px;color:#555;">-</div>
<div class="t n" style="left:742.6px;top:322.69px;font-size:8.49px;line-height:11.1px;color:#555;">22000.00<span class="k" style="color:#383838">元</span></div>
<div class="t n" style="left:832px;top:322.69px;font-size:8.49px;line-height:11.1px;color:#555;">22000.00<span class="k" style="color:#383838">元</span></div>
<div class="t n" style="left:921px;top:322.69px;font-size:8.49px;line-height:11.1px;color:#555;">22000.00<span class="k" style="color:#383838">元</span></div>
<div class="t n" style="left:1016.4px;top:322.69px;font-size:8.49px;line-height:11.1px;color:#555;">0.00<span class="k" style="color:#383838">元</span></div>
<svg style="left:1056px;top:322.99px;" width="9" height="8.6" viewBox="0 0 9 8.6" fill="none"><path d="M2.2 2.8 V.6 H6.8 V2.8" stroke="#444" stroke-width="1"/><rect x=".6" y="2.9" width="7.8" height="3.9" rx="1.3" stroke="#444" stroke-width="1.1"/><rect x="2.2" y="5" width="4.6" height="3.3" fill="#fff" stroke="#444" stroke-width="1"/><path d="M3.3 6.6 H5.7" stroke="#444" stroke-width=".7"/></svg>
<div class="t" style="left:1067.8px;top:324.19px;font-size:8.2px;color:#1f6dd0;">复制</div>
<div class="abs" style="left:89.6px;top:345.02px;width:1032.4px;height:35.66px;background:#fff"></div>
<div class="abs" style="left:121.5px;top:359.04999999999995px;width:8.6px;height:8.6px;border:1px solid #555;border-radius:1.2px;background:#fff"></div>
<div class="t n" style="left:143px;top:352.84999999999997px;font-size:8.49px;line-height:11.1px;color:#555;">2024-10-21<br>14:21</div>
<div class="t n" style="left:202px;top:358.34999999999997px;font-size:8.49px;line-height:11.1px;color:#555;">-</div>
<div class="t n" style="left:261.8px;top:352.84999999999997px;font-size:8.49px;line-height:11.1px;color:#555;">2024-10-21 1<br>4:21</div>
<div class="t n" style="left:326.8px;top:358.34999999999997px;font-size:8.49px;line-height:11.1px;color:#555;"><span class="k" style="color:#383838">老仓储专用</span></div>
<div class="t n" style="left:392.2px;top:352.84999999999997px;font-size:8.49px;line-height:11.1px;color:#3a7fc4;letter-spacing:-0.42px">CGRK241021<br>00002</div>
<div class="t n" style="left:452px;top:358.34999999999997px;font-size:8.49px;line-height:11.1px;color:#555;"><span class="k" style="color:#383838">供应商直供</span></div>
<div class="t n" style="left:511.2px;top:352.84999999999997px;font-size:8.49px;line-height:11.1px;color:#555;"><span class="k" style="color:#383838">麦金地供应商</span>(zrgys<br>4564)</div>
<div class="t n" style="left:594.8px;top:358.34999999999997px;font-size:8.49px;line-height:11.1px;color:#555;">-</div>
<div class="t n" style="left:678.3px;top:358.34999999999997px;font-size:8.49px;line-height:11.1px;color:#555;">-</div>
<div class="t n" style="left:742.6px;top:358.34999999999997px;font-size:8.49px;line-height:11.1px;color:#555;">700.00<span class="k" style="color:#383838">元</span></div>
<div class="t n" style="left:832px;top:358.34999999999997px;font-size:8.49px;line-height:11.1px;color:#555;">700.00<span class="k" style="color:#383838">元</span></div>
<div class="t n" style="left:921px;top:358.34999999999997px;font-size:8.49px;line-height:11.1px;color:#555;">700.00<span class="k" style="color:#383838">元</span></div>
<div class="t n" style="left:1016.4px;top:358.34999999999997px;font-size:8.49px;line-height:11.1px;color:#555;">0.00<span class="k" style="color:#383838">元</span></div>
<svg style="left:1056px;top:358.65px;" width="9" height="8.6" viewBox="0 0 9 8.6" fill="none"><path d="M2.2 2.8 V.6 H6.8 V2.8" stroke="#444" stroke-width="1"/><rect x=".6" y="2.9" width="7.8" height="3.9" rx="1.3" stroke="#444" stroke-width="1.1"/><rect x="2.2" y="5" width="4.6" height="3.3" fill="#fff" stroke="#444" stroke-width="1"/><path d="M3.3 6.6 H5.7" stroke="#444" stroke-width=".7"/></svg>
<div class="t" style="left:1067.8px;top:359.84999999999997px;font-size:8.2px;color:#1f6dd0;">复制</div>
<div class="abs" style="left:89.6px;top:380.67999999999995px;width:1032.4px;height:35.66px;background:#f7f8fa"></div>
<div class="abs" style="left:121.5px;top:394.7099999999999px;width:8.6px;height:8.6px;border:1px solid #555;border-radius:1.2px;background:#fff"></div>
<div class="t n" style="left:143px;top:388.50999999999993px;font-size:8.49px;line-height:11.1px;color:#555;">2024-10-21<br>14:20</div>
<div class="t n" style="left:202px;top:394.00999999999993px;font-size:8.49px;line-height:11.1px;color:#555;">-</div>
<div class="t n" style="left:261.8px;top:388.50999999999993px;font-size:8.49px;line-height:11.1px;color:#555;">2024-10-21 1<br>4:20</div>
<div class="t n" style="left:326.8px;top:394.00999999999993px;font-size:8.49px;line-height:11.1px;color:#555;"><span class="k" style="color:#383838">测试仓库</span>5</div>
<div class="t n" style="left:392.2px;top:388.50999999999993px;font-size:8.49px;line-height:11.1px;color:#3a7fc4;letter-spacing:-0.42px">CGRK241021<br>00001</div>
<div class="t n" style="left:452px;top:394.00999999999993px;font-size:8.49px;line-height:11.1px;color:#555;"><span class="k" style="color:#383838">供应商直供</span></div>
<div class="t n" style="left:511.2px;top:388.50999999999993px;font-size:8.49px;line-height:11.1px;color:#555;"><span class="k" style="color:#383838">麦金地供应商</span>(zrgys<br>4564)</div>
<div class="t n" style="left:594.8px;top:394.00999999999993px;font-size:8.49px;line-height:11.1px;color:#555;">-</div>
<div class="t n" style="left:678.3px;top:394.00999999999993px;font-size:8.49px;line-height:11.1px;color:#555;">-</div>
<div class="t n" style="left:742.6px;top:394.00999999999993px;font-size:8.49px;line-height:11.1px;color:#555;">200.00<span class="k" style="color:#383838">元</span></div>
<div class="t n" style="left:832px;top:394.00999999999993px;font-size:8.49px;line-height:11.1px;color:#555;">200.00<span class="k" style="color:#383838">元</span></div>
<div class="t n" style="left:921px;top:394.00999999999993px;font-size:8.49px;line-height:11.1px;color:#555;">200.00<span class="k" style="color:#383838">元</span></div>
<div class="t n" style="left:1016.4px;top:394.00999999999993px;font-size:8.49px;line-height:11.1px;color:#555;">0.00<span class="k" style="color:#383838">元</span></div>
<svg style="left:1056px;top:394.30999999999995px;" width="9" height="8.6" viewBox="0 0 9 8.6" fill="none"><path d="M2.2 2.8 V.6 H6.8 V2.8" stroke="#444" stroke-width="1"/><rect x=".6" y="2.9" width="7.8" height="3.9" rx="1.3" stroke="#444" stroke-width="1.1"/><rect x="2.2" y="5" width="4.6" height="3.3" fill="#fff" stroke="#444" stroke-width="1"/><path d="M3.3 6.6 H5.7" stroke="#444" stroke-width=".7"/></svg>
<div class="t" style="left:1067.8px;top:395.50999999999993px;font-size:8.2px;color:#1f6dd0;">复制</div>
<div class="abs" style="left:89.6px;top:416.34px;width:1032.4px;height:35.66px;background:#fff"></div>
<div class="abs" style="left:121.5px;top:430.36999999999995px;width:8.6px;height:8.6px;border:1px solid #555;border-radius:1.2px;background:#fff"></div>
<div class="t n" style="left:143px;top:424.16999999999996px;font-size:8.49px;line-height:11.1px;color:#555;">2024-10-12<br>10:24</div>
<div class="t n" style="left:202px;top:429.66999999999996px;font-size:8.49px;line-height:11.1px;color:#555;">-</div>
<div class="t n" style="left:261.8px;top:424.16999999999996px;font-size:8.49px;line-height:11.1px;color:#555;">2024-10-12 1<br>0:24</div>
<div class="t n" style="left:326.8px;top:429.66999999999996px;font-size:8.49px;line-height:11.1px;color:#555;"><span class="k" style="color:#383838">测试仓库</span>5</div>
<div class="t n" style="left:392.2px;top:424.16999999999996px;font-size:8.49px;line-height:11.1px;color:#3a7fc4;letter-spacing:-0.42px">CGRK241012<br>00001</div>
<div class="t n" style="left:452px;top:429.66999999999996px;font-size:8.49px;line-height:11.1px;color:#555;"><span class="k" style="color:#383838">供应商直供</span></div>
<div class="t n" style="left:511.2px;top:424.16999999999996px;font-size:8.49px;line-height:11.1px;color:#555;"><span class="k" style="color:#383838">麦金地供应商</span>(zrgys<br>4564)</div>
<div class="t n" style="left:594.8px;top:429.66999999999996px;font-size:8.49px;line-height:11.1px;color:#555;">-</div>
<div class="t n" style="left:678.3px;top:429.66999999999996px;font-size:8.49px;line-height:11.1px;color:#555;">-</div>
<div class="t n" style="left:742.6px;top:429.66999999999996px;font-size:8.49px;line-height:11.1px;color:#555;">25.00<span class="k" style="color:#383838">元</span></div>
<div class="t n" style="left:832px;top:429.66999999999996px;font-size:8.49px;line-height:11.1px;color:#555;">25.00<span class="k" style="color:#383838">元</span></div>
<div class="t n" style="left:921px;top:429.66999999999996px;font-size:8.49px;line-height:11.1px;color:#555;">25.00<span class="k" style="color:#383838">元</span></div>
<div class="t n" style="left:1016.4px;top:429.66999999999996px;font-size:8.49px;line-height:11.1px;color:#555;">0.00<span class="k" style="color:#383838">元</span></div>
<svg style="left:1056px;top:429.96999999999997px;" width="9" height="8.6" viewBox="0 0 9 8.6" fill="none"><path d="M2.2 2.8 V.6 H6.8 V2.8" stroke="#444" stroke-width="1"/><rect x=".6" y="2.9" width="7.8" height="3.9" rx="1.3" stroke="#444" stroke-width="1.1"/><rect x="2.2" y="5" width="4.6" height="3.3" fill="#fff" stroke="#444" stroke-width="1"/><path d="M3.3 6.6 H5.7" stroke="#444" stroke-width=".7"/></svg>
<svg style="left:1069px;top:429.66999999999996px;" width="6" height="9" viewBox="0 0 6 9" fill="none"><path d="M1.2 1.4 Q1.4 .4 3 .4 Q4.6 .4 4.8 1.4" fill="#3a3a46"/><rect x=".2" y="1.4" width="5.6" height="7.4" rx=".8" fill="#3a3a46"/><rect x="1.2" y="2.8" width="1.5" height="5" fill="#9a9aaa"/><rect x="3.3" y="2.8" width="1.5" height="5" fill="#a0a8b8"/></svg>
<div class="t" style="left:1076.3px;top:431.16999999999996px;font-size:8.2px;color:#1f6dd0;">复制</div>
<div class="abs" style="left:89.6px;top:452.0px;width:1032.4px;height:35.66px;background:#f7f8fa"></div>
<div class="abs" style="left:121.5px;top:466.03px;width:8.6px;height:8.6px;border:1px solid #555;border-radius:1.2px;background:#fff"></div>
<div class="t n" style="left:143px;top:459.83px;font-size:8.49px;line-height:11.1px;color:#555;">2024-10-11<br>21:46</div>
<div class="t n" style="left:202px;top:465.33px;font-size:8.49px;line-height:11.1px;color:#555;">-</div>
<div class="t n" style="left:261.8px;top:459.83px;font-size:8.49px;line-height:11.1px;color:#555;">2024-10-11 2<br>1:46</div>
<div class="t n" style="left:326.8px;top:465.33px;font-size:8.49px;line-height:11.1px;color:#555;"><span class="k" style="color:#383838">测试仓库</span>5</div>
<div class="t n" style="left:392.2px;top:459.83px;font-size:8.49px;line-height:11.1px;color:#3a7fc4;letter-spacing:-0.42px">CGRK241011<br>00003</div>
<div class="t n" style="left:452px;top:465.33px;font-size:8.49px;line-height:11.1px;color:#555;"><span class="k" style="color:#383838">供应商直供</span></div>
<div class="t n" style="left:511.2px;top:459.83px;font-size:8.49px;line-height:11.1px;color:#555;"><span class="k" style="color:#383838">麦金地供应商</span>(zrgys<br>4564)</div>
<div class="t n" style="left:594.8px;top:465.33px;font-size:8.49px;line-height:11.1px;color:#555;">-</div>
<div class="t n" style="left:678.3px;top:465.33px;font-size:8.49px;line-height:11.1px;color:#555;">-</div>
<div class="t n" style="left:742.6px;top:465.33px;font-size:8.49px;line-height:11.1px;color:#555;">120.00<span class="k" style="color:#383838">元</span></div>
<div class="t n" style="left:832px;top:465.33px;font-size:8.49px;line-height:11.1px;color:#555;">120.00<span class="k" style="color:#383838">元</span></div>
<div class="t n" style="left:921px;top:465.33px;font-size:8.49px;line-height:11.1px;color:#555;">120.00<span class="k" style="color:#383838">元</span></div>
<div class="t n" style="left:1016.4px;top:465.33px;font-size:8.49px;line-height:11.1px;color:#555;">0.00<span class="k" style="color:#383838">元</span></div>
<svg style="left:1056px;top:465.63px;" width="9" height="8.6" viewBox="0 0 9 8.6" fill="none"><path d="M2.2 2.8 V.6 H6.8 V2.8" stroke="#444" stroke-width="1"/><rect x=".6" y="2.9" width="7.8" height="3.9" rx="1.3" stroke="#444" stroke-width="1.1"/><rect x="2.2" y="5" width="4.6" height="3.3" fill="#fff" stroke="#444" stroke-width="1"/><path d="M3.3 6.6 H5.7" stroke="#444" stroke-width=".7"/></svg>
<div class="t" style="left:1067.8px;top:466.83px;font-size:8.2px;color:#1f6dd0;">复制</div>
<div class="abs" style="left:89.6px;top:487.65999999999997px;width:1032.4px;height:35.66px;background:#fff"></div>
<div class="abs" style="left:121.5px;top:501.68999999999994px;width:8.6px;height:8.6px;border:1px solid #555;border-radius:1.2px;background:#fff"></div>
<div class="t n" style="left:143px;top:495.48999999999995px;font-size:8.49px;line-height:11.1px;color:#555;">2024-10-11<br>11:01</div>
<div class="t n" style="left:202px;top:500.98999999999995px;font-size:8.49px;line-height:11.1px;color:#555;">-</div>
<div class="t n" style="left:261.8px;top:495.48999999999995px;font-size:8.49px;line-height:11.1px;color:#555;">2024-10-11 1<br>1:01</div>
<div class="t n" style="left:326.8px;top:500.98999999999995px;font-size:8.49px;line-height:11.1px;color:#555;"><span class="k" style="color:#383838">老仓储专用</span></div>
<div class="t n" style="left:392.2px;top:495.48999999999995px;font-size:8.49px;line-height:11.1px;color:#3a7fc4;letter-spacing:-0.42px">CGRK241011<br>00002</div>
<div class="t n" style="left:452px;top:500.98999999999995px;font-size:8.49px;line-height:11.1px;color:#555;"><span class="k" style="color:#383838">供应商直供</span></div>
<div class="t n" style="left:511.2px;top:495.48999999999995px;font-size:8.49px;line-height:11.1px;color:#555;"><span class="k" style="color:#383838">麦金地供应商</span>(zrgys<br>4564)</div>
<div class="t n" style="left:594.8px;top:500.98999999999995px;font-size:8.49px;line-height:11.1px;color:#555;">-</div>
<div class="t n" style="left:678.3px;top:500.98999999999995px;font-size:8.49px;line-height:11.1px;color:#555;">-</div>
<div class="t n" style="left:742.6px;top:500.98999999999995px;font-size:8.49px;line-height:11.1px;color:#555;">400.00<span class="k" style="color:#383838">元</span></div>
<div class="t n" style="left:832px;top:500.98999999999995px;font-size:8.49px;line-height:11.1px;color:#555;">400.00<span class="k" style="color:#383838">元</span></div>
<div class="t n" style="left:921px;top:500.98999999999995px;font-size:8.49px;line-height:11.1px;color:#555;">400.00<span class="k" style="color:#383838">元</span></div>
<div class="t n" style="left:1016.4px;top:500.98999999999995px;font-size:8.49px;line-height:11.1px;color:#555;">0.00<span class="k" style="color:#383838">元</span></div>
<svg style="left:1056px;top:501.28999999999996px;" width="9" height="8.6" viewBox="0 0 9 8.6" fill="none"><path d="M2.2 2.8 V.6 H6.8 V2.8" stroke="#444" stroke-width="1"/><rect x=".6" y="2.9" width="7.8" height="3.9" rx="1.3" stroke="#444" stroke-width="1.1"/><rect x="2.2" y="5" width="4.6" height="3.3" fill="#fff" stroke="#444" stroke-width="1"/><path d="M3.3 6.6 H5.7" stroke="#444" stroke-width=".7"/></svg>
<div class="t" style="left:1067.8px;top:502.48999999999995px;font-size:8.2px;color:#1f6dd0;">复制</div>
<div class="abs" style="left:89.6px;top:523.3199999999999px;width:1032.4px;height:35.66px;background:#f7f8fa"></div>
<div class="abs" style="left:121.5px;top:537.35px;width:8.6px;height:8.6px;border:1px solid #555;border-radius:1.2px;background:#fff"></div>
<div class="t n" style="left:143px;top:531.15px;font-size:8.49px;line-height:11.1px;color:#555;">2024-10-11<br>10:53</div>
<div class="t n" style="left:202px;top:536.65px;font-size:8.49px;line-height:11.1px;color:#555;">-</div>
<div class="t n" style="left:261.8px;top:531.15px;font-size:8.49px;line-height:11.1px;color:#555;">2024-10-11 1<br>0:53</div>
<div class="t n" style="left:326.8px;top:536.65px;font-size:8.49px;line-height:11.1px;color:#555;"><span class="k" style="color:#383838">老仓储专用</span></div>
<div class="t n" style="left:392.2px;top:531.15px;font-size:8.49px;line-height:11.1px;color:#3a7fc4;letter-spacing:-0.42px">CGRK241011<br>00001</div>
<div class="t n" style="left:452px;top:536.65px;font-size:8.49px;line-height:11.1px;color:#555;"><span class="k" style="color:#383838">供应商直供</span></div>
<div class="t n" style="left:511.2px;top:531.15px;font-size:8.49px;line-height:11.1px;color:#555;"><span class="k" style="color:#383838">麦金地供应商</span>(zrgys<br>4564)</div>
<div class="t n" style="left:594.8px;top:536.65px;font-size:8.49px;line-height:11.1px;color:#555;">-</div>
<div class="t n" style="left:678.3px;top:536.65px;font-size:8.49px;line-height:11.1px;color:#555;">-</div>
<div class="t n" style="left:742.6px;top:536.65px;font-size:8.49px;line-height:11.1px;color:#555;">0.00<span class="k" style="color:#383838">元</span></div>
<div class="t n" style="left:832px;top:536.65px;font-size:8.49px;line-height:11.1px;color:#555;">0.00<span class="k" style="color:#383838">元</span></div>
<div class="t n" style="left:921px;top:536.65px;font-size:8.49px;line-height:11.1px;color:#555;">0.00<span class="k" style="color:#383838">元</span></div>
<div class="t n" style="left:1016.4px;top:536.65px;font-size:8.49px;line-height:11.1px;color:#555;">0.00<span class="k" style="color:#383838">元</span></div>
<svg style="left:1056px;top:536.9499999999999px;" width="9" height="8.6" viewBox="0 0 9 8.6" fill="none"><path d="M2.2 2.8 V.6 H6.8 V2.8" stroke="#444" stroke-width="1"/><rect x=".6" y="2.9" width="7.8" height="3.9" rx="1.3" stroke="#444" stroke-width="1.1"/><rect x="2.2" y="5" width="4.6" height="3.3" fill="#fff" stroke="#444" stroke-width="1"/><path d="M3.3 6.6 H5.7" stroke="#444" stroke-width=".7"/></svg>
<div class="t" style="left:1067.8px;top:538.15px;font-size:8.2px;color:#1f6dd0;">复制</div>
<div class="abs" style="left:89.6px;top:558.98px;width:1032.4px;height:35.66px;background:#fff"></div>
<div class="abs" style="left:121.5px;top:573.0100000000001px;width:8.6px;height:8.6px;border:1px solid #555;border-radius:1.2px;background:#fff"></div>
<div class="t n" style="left:143px;top:566.8100000000001px;font-size:8.49px;line-height:11.1px;color:#555;">2024-10-10<br>19:57</div>
<div class="t n" style="left:202px;top:572.3100000000001px;font-size:8.49px;line-height:11.1px;color:#555;">-</div>
<div class="t n" style="left:262px;top:572.3100000000001px;font-size:8.49px;line-height:11.1px;color:#555;">-</div>
<div class="t n" style="left:326.8px;top:572.3100000000001px;font-size:8.49px;line-height:11.1px;color:#555;"><span class="k" style="color:#383838">老仓储专用</span></div>
<div class="t n" style="left:392.2px;top:566.8100000000001px;font-size:8.49px;line-height:11.1px;color:#3a7fc4;letter-spacing:-0.42px">CGRK241010<br>00005</div>
<div class="t n" style="left:452px;top:572.3100000000001px;font-size:8.49px;line-height:11.1px;color:#555;"><span class="k" style="color:#383838">供应商直供</span></div>
<div class="t n" style="left:511.2px;top:572.3100000000001px;font-size:8.49px;line-height:11.1px;color:#555;"><span class="k" style="color:#383838">大公司</span>(dgs6487)</div>
<div class="t n" style="left:594.8px;top:572.3100000000001px;font-size:8.49px;line-height:11.1px;color:#555;">-</div>
<div class="t n" style="left:678.3px;top:572.3100000000001px;font-size:8.49px;line-height:11.1px;color:#555;">-</div>
<div class="t n" style="left:742.6px;top:572.3100000000001px;font-size:8.49px;line-height:11.1px;color:#555;">10.00<span class="k" style="color:#383838">元</span></div>
<div class="t n" style="left:832px;top:572.3100000000001px;font-size:8.49px;line-height:11.1px;color:#555;">10.00<span class="k" style="color:#383838">元</span></div>
<div class="t n" style="left:921px;top:572.3100000000001px;font-size:8.49px;line-height:11.1px;color:#555;">10.00<span class="k" style="color:#383838">元</span></div>
<div class="t n" style="left:1016.4px;top:572.3100000000001px;font-size:8.49px;line-height:11.1px;color:#555;">0.00<span class="k" style="color:#383838">元</span></div>
<svg style="left:1056px;top:572.61px;" width="9" height="8.6" viewBox="0 0 9 8.6" fill="none"><path d="M2.2 2.8 V.6 H6.8 V2.8" stroke="#444" stroke-width="1"/><rect x=".6" y="2.9" width="7.8" height="3.9" rx="1.3" stroke="#444" stroke-width="1.1"/><rect x="2.2" y="5" width="4.6" height="3.3" fill="#fff" stroke="#444" stroke-width="1"/><path d="M3.3 6.6 H5.7" stroke="#444" stroke-width=".7"/></svg>
<svg style="left:1069px;top:572.3100000000001px;" width="6" height="9" viewBox="0 0 6 9" fill="none"><path d="M1.2 1.4 Q1.4 .4 3 .4 Q4.6 .4 4.8 1.4" fill="#3a3a46"/><rect x=".2" y="1.4" width="5.6" height="7.4" rx=".8" fill="#3a3a46"/><rect x="1.2" y="2.8" width="1.5" height="5" fill="#9a9aaa"/><rect x="3.3" y="2.8" width="1.5" height="5" fill="#a0a8b8"/></svg>
<div class="t" style="left:1076.3px;top:573.8100000000001px;font-size:8.2px;color:#1f6dd0;">复制</div>
<div class="abs" style="left:89.6px;top:594.6399999999999px;width:1032.4px;height:35.66px;background:#f7f8fa"></div>
<div class="abs" style="left:121.5px;top:608.67px;width:8.6px;height:8.6px;border:1px solid #555;border-radius:1.2px;background:#fff"></div>
<div class="t n" style="left:143px;top:602.4699999999999px;font-size:8.49px;line-height:11.1px;color:#555;">2024-10-10<br>19:40</div>
<div class="t n" style="left:202px;top:602.4699999999999px;font-size:8.49px;line-height:11.1px;color:#555;">2024-10-10<br>00:00</div>
<div class="t n" style="left:261.8px;top:607.9699999999999px;font-size:8.49px;line-height:11.1px;color:#555;"></div>
<div class="t n" style="left:326.8px;top:607.9699999999999px;font-size:8.49px;line-height:11.1px;color:#555;"><span class="k" style="color:#383838">测试仓库</span>5</div>
<div class="t n" style="left:392.2px;top:602.4699999999999px;font-size:8.49px;line-height:11.1px;color:#3a7fc4;letter-spacing:-0.42px">CGRK241010<br>00004</div>
<div class="t n" style="left:452px;top:607.9699999999999px;font-size:8.49px;line-height:11.1px;color:#555;"><span class="k" style="color:#383838">供应商直供</span></div>
<div class="t n" style="left:511.2px;top:607.9699999999999px;font-size:8.49px;line-height:11.1px;color:#555;"><span class="k" style="color:#383838">蔬菜供应商</span></div>
<div class="t n" style="left:594.8px;top:607.9699999999999px;font-size:8.49px;line-height:11.1px;color:#555;">-</div>
<div class="t n" style="left:678.3px;top:607.9699999999999px;font-size:8.49px;line-height:11.1px;color:#555;">-</div>
<div class="t n" style="left:742.6px;top:607.9699999999999px;font-size:8.49px;line-height:11.1px;color:#555;">0.00<span class="k" style="color:#383838">元</span></div>
<div class="t n" style="left:832px;top:607.9699999999999px;font-size:8.49px;line-height:11.1px;color:#555;">0.00<span class="k" style="color:#383838">元</span></div>
<div class="t n" style="left:921px;top:607.9699999999999px;font-size:8.49px;line-height:11.1px;color:#555;">0.00<span class="k" style="color:#383838">元</span></div>
<div class="t n" style="left:1016.4px;top:607.9699999999999px;font-size:8.49px;line-height:11.1px;color:#555;">0.00<span class="k" style="color:#383838">元</span></div>
<svg style="left:1056px;top:608.2699999999999px;" width="9" height="8.6" viewBox="0 0 9 8.6" fill="none"><path d="M2.2 2.8 V.6 H6.8 V2.8" stroke="#444" stroke-width="1"/><rect x=".6" y="2.9" width="7.8" height="3.9" rx="1.3" stroke="#444" stroke-width="1.1"/><rect x="2.2" y="5" width="4.6" height="3.3" fill="#fff" stroke="#444" stroke-width="1"/><path d="M3.3 6.6 H5.7" stroke="#444" stroke-width=".7"/></svg>
<svg style="left:1069px;top:607.9699999999999px;" width="6" height="9" viewBox="0 0 6 9" fill="none"><path d="M1.2 1.4 Q1.4 .4 3 .4 Q4.6 .4 4.8 1.4" fill="#3a3a46"/><rect x=".2" y="1.4" width="5.6" height="7.4" rx=".8" fill="#3a3a46"/><rect x="1.2" y="2.8" width="1.5" height="5" fill="#9a9aaa"/><rect x="3.3" y="2.8" width="1.5" height="5" fill="#a0a8b8"/></svg>
<div class="t" style="left:1076.3px;top:609.4699999999999px;font-size:8.2px;color:#1f6dd0;">复制</div>
</div>
<div class="abs" style="left:113.5px;top:244px;width:1px;height:366px;background:#e8eaee"></div>
<div class="abs" style="left:137.4px;top:244px;width:1px;height:366px;background:#e8eaee"></div>
<div class="abs" style="left:1050.8px;top:244px;width:1px;height:366px;background:#e8eaee"></div>
<div class="abs" style="left:90px;top:609.8px;width:1032px;height:10px;background:#f1f1f1"></div>
<div class="abs" style="left:100px;top:609.8px;width:663px;height:10px;background:#c8c8c8"></div>
<svg style="left:93px;top:612.5px;" width="4" height="5" viewBox="0 0 4 5" fill="none"><path d="M3 .5 L1 2.5 L3 4.5" stroke="#444" stroke-width="1"/></svg>
<svg style="left:1116px;top:612.5px;" width="4" height="5" viewBox="0 0 4 5" fill="none"><path d="M1 .5 L3 2.5 L1 4.5" stroke="#444" stroke-width="1"/></svg>
<div class="t" style="left:738.6px;top:637.6px;font-size:8.25px;color:#444;">共78条记录, 每页</div>
<div class="abs" style="left:804.6px;top:632.5px;width:35px;height:17px;border:1px solid #eef0f3"></div>
<div class="t" style="left:811px;top:639.3px;font-size:7.1px;color:#333;">10</div>
<svg style="left:828px;top:639.6px;" width="6.5" height="4" viewBox="0 0 6.5 4" fill="none"><path d="M.6 .6 L3.25 3.2 L5.9 .6" stroke="#555" stroke-width=".95"/></svg>
<div class="t" style="left:843px;top:638px;font-size:7.6px;color:#444;">条</div>
<div class="abs" style="left:866px;top:632.5px;width:17.8px;height:17px;background:#eceef2"></div>
<svg style="left:873px;top:639.3px;" width="4" height="5.5" viewBox="0 0 4 5.5" fill="none"><path d="M3.2 .5 L1 2.75 L3.2 5" stroke="#aaa" stroke-width=".9"/></svg>
<div class="abs" style="left:889.3px;top:632.5px;width:17.8px;height:17px;background:#1468f5"></div>
<div class="t" style="left:889.3px;top:638.9px;width:17.8px;text-align:center;font-size:7.8px;color:#fff">1</div>
<div class="abs" style="left:913.8px;top:632.5px;width:17.8px;height:17px;border:1px solid #eef0f3"></div>
<div class="t" style="left:913.8px;top:638.9px;width:17.8px;text-align:center;font-size:7.8px;color:#444">2</div>
<div class="abs" style="left:937.4px;top:632.5px;width:17.8px;height:17px;border:1px solid #eef0f3"></div>
<div class="t" style="left:937.4px;top:638.9px;width:17.8px;text-align:center;font-size:7.8px;color:#444">3</div>
<div class="abs" style="left:960.5px;top:632.5px;width:17.8px;height:17px;border:1px solid #eef0f3"></div>
<div class="t" style="left:960.5px;top:638.9px;width:17.8px;text-align:center;font-size:7.8px;color:#444">4</div>
<div class="abs" style="left:984px;top:632.5px;width:17.8px;height:17px;border:1px solid #eef0f3"></div>
<div class="t" style="left:984px;top:638.9px;width:17.8px;text-align:center;font-size:7.8px;color:#444">5</div>
<div class="abs" style="left:1014px;top:632.5px;width:17.8px;height:17px;border:1px solid #eef0f3"></div>
<div class="t" style="left:1014px;top:638.9px;width:17.8px;text-align:center;font-size:7.8px;color:#444">8</div>
<div class="abs" style="left:1037.5px;top:632.5px;width:17.8px;height:17px;border:1px solid #eef0f3"></div>
<div class="t" style="left:1037.5px;top:638.9px;width:17.8px;text-align:center;font-size:7.8px;color:#444"></div>
<svg style="left:1044.5px;top:639.3px;" width="4" height="5.5" viewBox="0 0 4 5.5" fill="none"><path d="M.8 .5 L3 2.75 L.8 5" stroke="#444" stroke-width=".9"/></svg>
<div class="t" style="left:1005.2px;top:639.6px;font-size:6px;color:#888;">···</div>
<div class="abs" style="left:1064.6px;top:632.5px;width:45.4px;height:17px;border:1px solid #eef0f3"></div>
<div class="abs" style="left:1087px;top:632.5px;width:23px;height:17px;background:#f3f4f6"></div>
<div class="t" style="left:1070.8px;top:638.2px;font-size:7.5px;color:#333;">1</div>
<div class="t" style="left:1091px;top:638.4px;font-size:8.2px;color:#444;">/8页</div>
<div class="abs" style="left:1113.5px;top:448px;width:28px;height:26.4px;background:#dde6fa;border-radius:4px 0 0 4px"></div>
<svg style="left:1122px;top:451px;" width="10" height="9.5" viewBox="0 0 10 9.5" fill="none"><path d="M5 .6 L9.2 2.6 L5 4.6 L.8 2.6 Z" fill="#8fb4f0" stroke="#2a62c8" stroke-width="1.1"/><path d="M.8 4.7 L5 6.7 L9.2 4.7 M.8 6.8 L5 8.8 L9.2 6.8" stroke="#2a62c8" stroke-width="1.2"/></svg>
<div class="t n" style="left:1120.3px;top:464.8px;font-size:7.2px;color:#2559b8;font-weight:bold">任务</div>
<div class="abs" style="left:1123.2px;top:532.7px;width:18px;height:60.7px;background:#1066ee;border-radius:3px 0 0 3px"></div>
<svg style="left:1127.5px;top:537.5px;" width="10" height="10" viewBox="0 0 10 10" fill="none"><circle cx="5" cy="5" r="4.2" stroke="#fff" stroke-width=".9"/><circle cx="3.3" cy="5" r=".5" fill="#fff"/><circle cx="5" cy="5" r=".5" fill="#fff"/><circle cx="6.7" cy="5" r=".5" fill="#fff"/></svg>
<div class="t n" style="left:1128.4px;top:553.5px;font-size:7.3px;color:#fff;font-weight:bold">联</div>
<div class="t n" style="left:1128.4px;top:562.6px;font-size:7.3px;color:#fff;font-weight:bold">系</div>
<div class="t n" style="left:1128.4px;top:571.7px;font-size:7.3px;color:#fff;font-weight:bold">客</div>
<div class="t n" style="left:1128.4px;top:580.8px;font-size:7.3px;color:#fff;font-weight:bold">服</div>
</div></body></html>
